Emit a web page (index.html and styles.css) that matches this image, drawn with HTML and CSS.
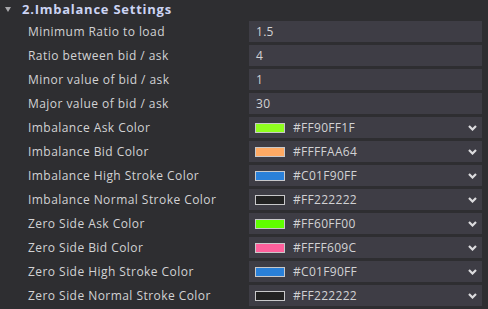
FILE: index.html
```html
<!DOCTYPE html>
<html>
<head>
<meta charset="utf-8">
<link rel="stylesheet" href="styles.css">
</head>
<body>
<div class="panel">
  <div class="header">
    <span class="caret"></span>
    <span class="title">2.Imbalance Settings</span>
  </div>
  <div class="row"><div class="label">Minimum Ratio to load</div><div class="field"><span class="value">1.5</span></div></div>
  <div class="row"><div class="label">Ratio between bid / ask</div><div class="field"><span class="value">4</span></div></div>
  <div class="row"><div class="label">Minor value of bid / ask</div><div class="field"><span class="value">1</span></div></div>
  <div class="row"><div class="label">Major value of bid / ask</div><div class="field"><span class="value">30</span></div></div>
  <div class="row"><div class="label">Imbalance Ask Color</div><div class="field color"><span class="swatch" style="background:#90FF1F"></span><span class="hex">#FF90FF1F</span><svg class="chev" viewBox="0 0 9 6"><polyline points="1,1 4.5,4.5 8,1"/></svg></div></div>
  <div class="row"><div class="label">Imbalance Bid Color</div><div class="field color"><span class="swatch" style="background:#FFAA64"></span><span class="hex">#FFFFAA64</span><svg class="chev" viewBox="0 0 9 6"><polyline points="1,1 4.5,4.5 8,1"/></svg></div></div>
  <div class="row"><div class="label">Imbalance High Stroke Color</div><div class="field color"><span class="swatch" style="background:#2a80d8"></span><span class="hex">#C01F90FF</span><svg class="chev" viewBox="0 0 9 6"><polyline points="1,1 4.5,4.5 8,1"/></svg></div></div>
  <div class="row"><div class="label">Imbalance Normal Stroke Color</div><div class="field color"><span class="swatch" style="background:#222222"></span><span class="hex">#FF222222</span><svg class="chev" viewBox="0 0 9 6"><polyline points="1,1 4.5,4.5 8,1"/></svg></div></div>
  <div class="row"><div class="label">Zero Side Ask Color</div><div class="field color"><span class="swatch" style="background:#60FF00"></span><span class="hex">#FF60FF00</span><svg class="chev" viewBox="0 0 9 6"><polyline points="1,1 4.5,4.5 8,1"/></svg></div></div>
  <div class="row"><div class="label">Zero Side Bid Color</div><div class="field color"><span class="swatch" style="background:#FF609C"></span><span class="hex">#FFFF609C</span><svg class="chev" viewBox="0 0 9 6"><polyline points="1,1 4.5,4.5 8,1"/></svg></div></div>
  <div class="row"><div class="label">Zero Side High Stroke Color</div><div class="field color"><span class="swatch" style="background:#2a80d8"></span><span class="hex">#C01F90FF</span><svg class="chev" viewBox="0 0 9 6"><polyline points="1,1 4.5,4.5 8,1"/></svg></div></div>
  <div class="row"><div class="label">Zero Side Normal Stroke Color</div><div class="field color"><span class="swatch" style="background:#222222"></span><span class="hex">#FF222222</span><svg class="chev" viewBox="0 0 9 6"><polyline points="1,1 4.5,4.5 8,1"/></svg></div></div>
</div>
</body>
</html>
```
FILE: styles.css
```css
html, body {
  margin: 0;
  padding: 0;
  background: #2e2e31;
}
body {
  width: 488px;
  height: 309px;
  overflow: hidden;
  font-family: "Open Sans", "DejaVu Sans", sans-serif;
  font-size: 12px;
  color: #d2d2d4;
}
.panel {
  display: flex;
  flex-direction: column;
  gap: 3px;
  padding-right: 6px;
}
.header {
  height: 18px;
  display: flex;
  align-items: center;
  padding-left: 5px;
}
.caret {
  width: 0;
  height: 0;
  border-left: 3.5px solid transparent;
  border-right: 3.5px solid transparent;
  border-top: 5px solid #a8a8ac;
  margin-right: 11px;
}
.title {
  font-weight: 700;
  font-size: 13px;
  letter-spacing: 0.75px;
  color: #ccd4f4;
}
.row {
  display: flex;
  height: 21px;
  align-items: center;
}
.label {
  width: 221px;
  padding-left: 28px;
  white-space: nowrap;
  letter-spacing: 0.45px;
}
.field {
  flex: 1;
  height: 21px;
  background: #3e3d45;
  display: flex;
  align-items: center;
  padding-left: 7px;
  letter-spacing: 0.3px;
}
.field.color {
  padding-left: 6px;
  padding-right: 5px;
}
.swatch {
  width: 28px;
  height: 8px;
  border: 1px solid #c8c8ca;
  margin-right: 8px;
}
.hex {
  flex: 1;
}
.chev {
  width: 9px;
  height: 6px;
  fill: none;
  stroke: #dcdcde;
  stroke-width: 2.2;
}
```
